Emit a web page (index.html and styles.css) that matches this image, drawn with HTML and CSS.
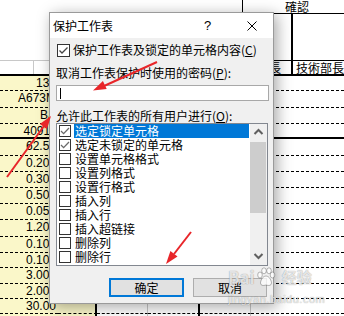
FILE: index.html
```html
<!DOCTYPE html>
<html lang="zh-CN">
<head>
    <meta charset="UTF-8">
    <meta name="viewport" content="width=device-width, initial-scale=1.0">
    <title>保护工作表</title>
    <link rel="stylesheet" href="styles.css">
</head>
<body>
<div class="sheet">
    <div class="head">
        <div class="head-left">
            <div class="hl-row"><div class="hl-cell"></div></div>
        </div>
        <div class="head-right">
            <div class="confirm">確認</div>
            <div class="sign">
                <div class="sign-col s1"><div class="sign-box"></div><div class="sign-name">課長</div></div>
                <div class="sign-col s2"><div class="sign-box"></div><div class="sign-name">技術部長</div></div>
            </div>
        </div>
    </div>

    <div class="row h15"><div class="c1">137</div><div class="c2"></div><div class="c3"></div><div class="c4"></div><div class="c5"></div><div class="c6"></div></div>
    <div class="row h17"><div class="c1">A673M</div><div class="c2"></div><div class="c3"></div><div class="c4"></div><div class="c5"></div><div class="c6"></div></div>
    <div class="row"><div class="c1">BA</div><div class="c2"></div><div class="c3"></div><div class="c4"></div><div class="c5"></div><div class="c6"></div></div>
    <div class="row h15 thick"><div class="c1">40911</div><div class="c2"></div><div class="c3"></div><div class="c4"></div><div class="c5"></div><div class="c6"></div></div>
    <div class="row h17"><div class="c1">62.50</div><div class="c2"></div><div class="c3"></div><div class="c4"></div><div class="c5"></div><div class="c6"></div></div>
    <div class="row"><div class="c1">0.200</div><div class="c2"></div><div class="c3"></div><div class="c4"></div><div class="c5"></div><div class="c6"></div></div>
    <div class="row"><div class="c1">0.300</div><div class="c2"></div><div class="c3"></div><div class="c4"></div><div class="c5"></div><div class="c6"></div></div>
    <div class="row"><div class="c1">0.500</div><div class="c2"></div><div class="c3"></div><div class="c4"></div><div class="c5"></div><div class="c6"></div></div>
    <div class="row"><div class="c1">0.050</div><div class="c2"></div><div class="c3"></div><div class="c4"></div><div class="c5"></div><div class="c6"></div></div>
    <div class="row h17"><div class="c1">1.200</div><div class="c2"></div><div class="c3"></div><div class="c4"></div><div class="c5"></div><div class="c6"></div></div>
    <div class="row"><div class="c1">0.100</div><div class="c2"></div><div class="c3"></div><div class="c4"></div><div class="c5"></div><div class="c6"></div></div>
    <div class="row h15"><div class="c1">0.100</div><div class="c2"></div><div class="c3"></div><div class="c4"></div><div class="c5"></div><div class="c6"></div></div>
    <div class="row"><div class="c1">3.000</div><div class="c2"></div><div class="c3"></div><div class="c4"></div><div class="c5"></div><div class="c6"></div></div>
    <div class="row h15"><div class="c1">2.000</div><div class="c2"></div><div class="c3"></div><div class="c4"></div><div class="c5"></div><div class="c6"></div></div>
    <div class="row h15"><div class="c1">30.00</div><div class="c2"></div><div class="c3"></div><div class="c4"></div><div class="c5"></div><div class="c6"></div></div>
    <div class="row"><div class="c1"></div><div class="c2"></div><div class="c3"></div><div class="c4"></div><div class="c5"></div><div class="c6"></div></div>
</div>

<div class="dialog">
    <div class="titlebar">
        <span class="title">保护工作表</span>
        <span class="help">?</span>
        <span class="close">
            <svg width="10" height="10" viewBox="0 0 10 10"><path d="M0.5 0.5L9.5 9.5M9.5 0.5L0.5 9.5" stroke="#000" stroke-width="1" fill="none"/></svg>
        </span>
    </div>
    <div class="body">
        <div class="check-row">
            <span class="box big"><svg width="11" height="11" viewBox="0 0 11 11"><path d="M1.5 5.5L4 8L9.5 2.5" stroke="#444" stroke-width="1.3" fill="none"/></svg></span>
            <span>保护工作表及锁定的单元格内容(<u>C</u>)</span>
        </div>
        <div class="label first">取消工作表保护时使用的密码(<u>P</u>):</div>
        <div class="input"><span class="caret"></span></div>
        <div class="label second">允许此工作表的所有用户进行(<u>O</u>):</div>
        <div class="list">
            <div class="items">
                <div class="item"><span class="box"><svg width="10" height="10" viewBox="0 0 10 10"><path d="M1 5L3.6 7.6L9 2" stroke="#6a6a6a" stroke-width="1.3" fill="none"/></svg></span><span class="txt sel">选定锁定单元格</span></div>
                <div class="item"><span class="box"><svg width="10" height="10" viewBox="0 0 10 10"><path d="M1 5L3.6 7.6L9 2" stroke="#6a6a6a" stroke-width="1.3" fill="none"/></svg></span><span class="txt">选定未锁定的单元格</span></div>
                <div class="item"><span class="box"></span><span class="txt">设置单元格格式</span></div>
                <div class="item"><span class="box"></span><span class="txt">设置列格式</span></div>
                <div class="item"><span class="box"></span><span class="txt">设置行格式</span></div>
                <div class="item"><span class="box"></span><span class="txt">插入列</span></div>
                <div class="item"><span class="box"></span><span class="txt">插入行</span></div>
                <div class="item"><span class="box"></span><span class="txt">插入超链接</span></div>
                <div class="item"><span class="box"></span><span class="txt">删除列</span></div>
                <div class="item"><span class="box"></span><span class="txt">删除行</span></div>
            </div>
            <div class="scrollbar">
                <div class="sb-arrow">
                    <svg width="17" height="17" viewBox="0 0 17 17"><path d="M4.5 10L8.5 6L12.5 10" stroke="#606060" stroke-width="2" fill="none"/></svg>
                </div>
                <div class="thumb"></div>
                <div class="track"></div>
                <div class="sb-arrow">
                    <svg width="17" height="17" viewBox="0 0 17 17"><path d="M4.5 6L8.5 10L12.5 6" stroke="#606060" stroke-width="2" fill="none"/></svg>
                </div>
            </div>
        </div>
        <div class="buttons">
            <button class="btn default">确定</button>
            <button class="btn cancel">取消</button>
        </div>
    </div>
</div>

<div class="watermark">
    <div class="wm-logo">
        <span>Bai</span>
        <svg class="paw" width="20" height="20" viewBox="0 0 20 20">
            <g fill="rgba(255,255,255,0.75)" stroke="rgba(0,0,0,0.35)" stroke-width="0.8">
                <ellipse cx="4" cy="8" rx="2.3" ry="3"/>
                <ellipse cx="8" cy="3.8" rx="2.3" ry="3"/>
                <ellipse cx="13" cy="3.8" rx="2.3" ry="3"/>
                <ellipse cx="16.5" cy="8" rx="2.3" ry="3"/>
                <path d="M10 9C6.5 9 4.5 14 4.5 16C4.5 18.5 7 19 10 18C13 19 15.5 18.5 15.5 16C15.5 14 13.5 9 10 9Z"/>
            </g>
        </svg>
        <span class="wm-cn">经验</span>
    </div>
    <div class="wm-url">jingyan.baidu.com</div>
</div>

<svg class="arrows" width="344" height="316" viewBox="0 0 344 316">
    <g stroke="#e8262a" stroke-width="2" fill="#e8262a">
        <line x1="157" y1="62" x2="104" y2="86"/>
        <polygon points="93,90.5 106.7,89.1 102.9,80.9" stroke="none"/>
        <line x1="7" y1="177" x2="44" y2="126"/>
        <polygon points="51,116 47,129 39.8,124" stroke="none"/>
        <line x1="191" y1="232" x2="174" y2="254"/>
        <polygon points="166,264 177.5,256.6 170.4,251" stroke="none"/>
    </g>
</svg>
</body>
</html>
```

FILE: styles.css
```css
* {
    box-sizing: border-box;
    margin: 0;
    padding: 0;
}

body {
    width: 344px;
    height: 316px;
    overflow: hidden;
    position: relative;
    background: #fff;
    font-family: "Liberation Sans", Arial, sans-serif;
    font-size: 12px;
    color: #000;
}

/* sheet behind the dialog */
.sheet {
    width: 344px;
}

.head {
    display: flex;
    height: 76px;
    border-bottom: 2px solid #000;
    font-family: "Noto Sans CJK JP", sans-serif;
}

.head-left {
    width: 250px;
    display: flex;
    flex-direction: column;
    justify-content: flex-end;
}

.hl-row {
    height: 14px;
    border-top: 1px solid #c8c8c8;
}

.hl-cell {
    width: 34px;
    height: 100%;
    border-right: 1px solid #c8c8c8;
}

.head-right {
    flex: 1;
    display: flex;
    flex-direction: column;
}

.confirm {
    height: 14px;
    border-left: 1px solid #000;
    border-bottom: 1px solid #000;
    padding-left: 42px;
    line-height: 14px;
    font-size: 12px;
}

.sign {
    flex: 1;
    display: flex;
}

.sign-col {
    display: flex;
    flex-direction: column;
}

.s1 {
    width: 51px;
    border-right: 2px solid #000;
}

.s2 {
    flex: 1;
    overflow: hidden;
}

.sign-box {
    flex: 1;
    border-bottom: 1px solid #000;
}

.sign-name {
    height: 13px;
    line-height: 13px;
    font-size: 12px;
    white-space: nowrap;
}

.s1 .sign-name {
    text-align: right;
    padding-right: 10px;
}

.s2 .sign-name {
    padding-left: 3px;
}

.row {
    display: flex;
    height: 16px;
}

.row.h15 {
    height: 15px;
}

.row.h17 {
    height: 17px;
}

.row > div {
    border-bottom: 1px dashed #000;
}

.row.thick > div {
    border-bottom: 2px solid #000;
}

.c1 {
    width: 58px;
    background: #faf7c9;
    text-align: right;
    padding-right: 2px;
    line-height: 15px;
    white-space: nowrap;
}

.c2 {
    width: 39px;
    background: #faf7c9;
    border-right: 2px solid #000;
}

.c3 {
    width: 51px;
    border-right: 1px solid #c8c8c8;
}

.c4 {
    width: 52px;
    border-right: 2px solid #000;
}

.c5 {
    width: 51px;
    border-right: 1px solid #c8c8c8;
}

.c6 {
    flex: 1;
}

/* protect sheet dialog */
.dialog {
    position: absolute;
    left: 49px;
    top: 12px;
    width: 225px;
    height: 292px;
    border: 1px solid #9a9a9a;
    background: #f0f0f0;
    box-shadow: 3px 3px 14px rgba(0, 0, 0, 0.35);
    font-family: "Noto Sans CJK SC", sans-serif;
    font-size: 12px;
    display: flex;
    flex-direction: column;
}

.titlebar {
    height: 25px;
    background: #fff;
    display: flex;
    align-items: center;
}

.title {
    flex: 1;
    padding-left: 3px;
    line-height: 25px;
}

.help {
    width: 47px;
    text-align: center;
    font-family: "Liberation Sans", Arial, sans-serif;
    font-size: 13px;
}

.close {
    width: 42px;
    display: flex;
    justify-content: center;
    align-items: center;
}

.body {
    flex: 1;
    padding: 0 5px 0 6px;
    display: flex;
    flex-direction: column;
}

.check-row {
    height: 14px;
    margin-top: 5px;
    display: flex;
    align-items: center;
    white-space: nowrap;
    line-height: 14px;
}

.box {
    width: 12px;
    height: 12px;
    border: 1px solid #333;
    background: #fff;
    display: flex;
    justify-content: center;
    align-items: center;
    flex-shrink: 0;
}

.box.big {
    width: 13px;
    height: 13px;
    margin-left: 1px;
    margin-right: 3px;
}

.label {
    height: 14px;
    line-height: 14px;
    white-space: nowrap;
}

.label.first {
    margin-top: 9px;
}

.label.second {
    margin-top: 8px;
}

.input {
    margin-top: 5px;
    height: 16px;
    width: 213px;
    border: 1px solid #a8a8a8;
    background: #fff;
    padding: 2px 0 0 3px;
}

.caret {
    display: block;
    width: 1px;
    height: 11px;
    background: #000;
}

.list {
    height: 143px;
    border: 1px solid #828790;
    background: #fff;
    display: flex;
}

.items {
    flex: 1;
}

.item {
    height: 14px;
    display: flex;
    align-items: center;
    white-space: nowrap;
}

.item .box {
    margin-left: 2px;
}

.txt {
    flex: 1;
    margin-left: 3px;
    margin-right: 1px;
    padding-left: 1px;
    line-height: 14px;
    height: 14px;
}

.txt.sel {
    background: #0078d7;
    color: #fff;
}

.scrollbar {
    width: 17px;
    background: #f0f0f0;
    display: flex;
    flex-direction: column;
}

.sb-arrow {
    height: 17px;
}

.sb-arrow svg {
    display: block;
}

.thumb {
    height: 71px;
    margin: 1px 1px 0 0;
    background: #cdcdcd;
}

.track {
    flex: 1;
}

.buttons {
    margin-top: 12px;
    display: flex;
    justify-content: flex-end;
    padding-right: 1px;
}

.btn {
    height: 19px;
    background: #e1e1e1;
    border: 1px solid #adadad;
    font-family: "Noto Sans CJK SC", sans-serif;
    font-size: 12px;
    line-height: 15px;
    color: #000;
}

.btn.default {
    width: 75px;
    border: 2px solid #0078d7;
}

.btn.cancel {
    width: 74px;
    margin-left: 9px;
}

/* watermark and red annotation arrows on top */
.watermark {
    position: absolute;
    left: 228px;
    top: 266px;
    color: rgba(255, 255, 255, 0.75);
    text-shadow: 0 0 1px rgba(0, 0, 0, 0.45);
    font-family: "Noto Sans CJK SC", sans-serif;
    pointer-events: none;
}

.wm-logo {
    display: flex;
    align-items: center;
    height: 22px;
    font-size: 17px;
    font-weight: bold;
    line-height: 22px;
    white-space: nowrap;
}

.paw {
    margin: 0 6px 0 1px;
}

.wm-cn {
    font-size: 15px;
}

.wm-url {
    margin-top: 6px;
    font-family: "Liberation Sans", Arial, sans-serif;
    font-size: 11px;
    line-height: 11px;
    letter-spacing: 0.5px;
}

.arrows {
    position: absolute;
    left: 0;
    top: 0;
    pointer-events: none;
}
```
